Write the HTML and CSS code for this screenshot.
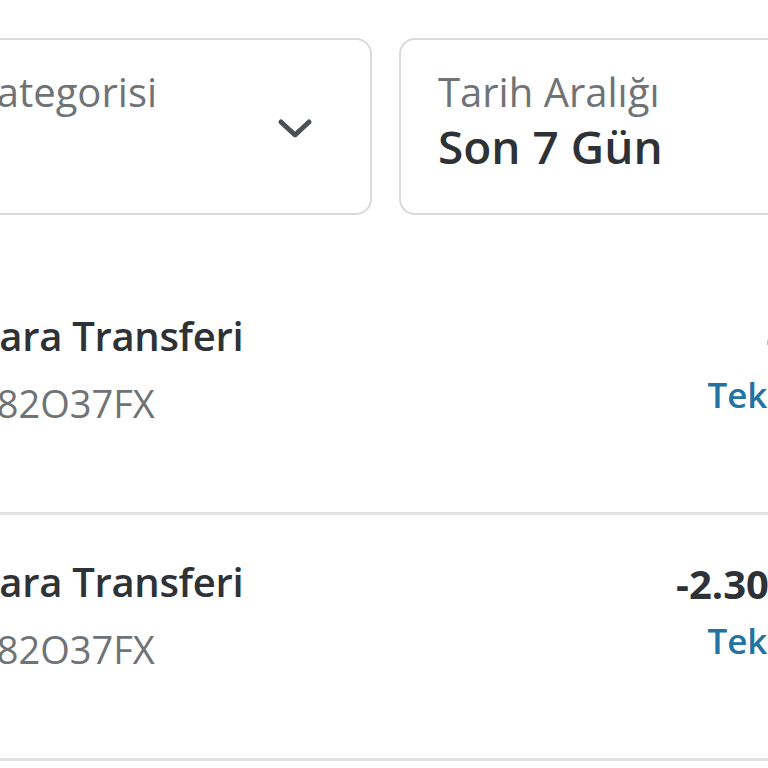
FILE: index.html
```html
<!DOCTYPE html>
<html lang="tr">
<head>
<meta charset="utf-8">
<title>İşlemler</title>
<link rel="stylesheet" href="styles.css">
</head>
<body>
<div class="page">
  <div class="filters">
    <div class="card card-wide">
      <div class="card-text">
        <div class="card-label">İşlem Kategorisi</div>
        <div class="card-value"></div>
      </div>
      <svg class="chevron" width="36" height="22" viewBox="0 0 36 22" aria-hidden="true">
        <polyline points="4,4 18,17 32,4" fill="none" stroke="#4b5055" stroke-width="5" stroke-linecap="round" stroke-linejoin="round"/>
      </svg>
    </div>
    <div class="card">
      <div class="card-text">
        <div class="card-label">Tarih Aralığı</div>
        <div class="card-value">Son 7 Gün</div>
      </div>
    </div>
  </div>
  <div class="list">
    <div class="row">
      <div class="row-main">
        <div class="row-title">Para Transferi</div>
        <div class="row-id">782O37FX</div>
      </div>
      <div class="row-side">
        <div class="row-amount">-5TL</div>
        <div class="row-link">Tekrarla</div>
      </div>
    </div>
    <div class="row">
      <div class="row-main">
        <div class="row-title">Para Transferi</div>
        <div class="row-id">782O37FX</div>
      </div>
      <div class="row-side">
        <div class="row-amount">-2.300 TL</div>
        <div class="row-link">Tekrarla</div>
      </div>
    </div>
  </div>
</div>
</body>
</html>
```

FILE: styles.css
```css
html, body {
  margin: 0;
  padding: 0;
  background: #ffffff;
  overflow: hidden;
}

body {
  font-family: "Open Sans", "Noto Sans", sans-serif;
  color: #2e3236;
  width: 768px;
  height: 768px;
}

.page {
  margin-left: -177px;
  width: 1100px;
  padding-top: 38px;
}

.filters {
  display: flex;
  gap: 27px;
}

.card {
  box-sizing: border-box;
  width: 542px;
  height: 177px;
  border: 2px solid #dadada;
  border-radius: 16px;
  padding: 28px 57px 0 37px;
  display: flex;
  align-items: flex-start;
  flex: none;
}

.card-wide {
  width: 549px;
}

.card-text {
  display: flex;
  flex-direction: column;
}

.card-label {
  font-size: 40px;
  line-height: 48px;
  color: #707376;
  white-space: nowrap;
}

.card-value {
  margin-top: 2px;
  font-size: 46px;
  line-height: 56px;
  height: 56px;
  font-weight: 600;
  color: #2e3236;
  white-space: nowrap;
}

.chevron {
  margin-left: auto;
  align-self: center;
  margin-top: -24px;
}

.list {
  margin-top: 54px;
}

.row {
  box-sizing: border-box;
  height: 246px;
  border-bottom: 3px solid #e1e1e1;
  padding: 43px 75px 0 152px;
  display: flex;
  justify-content: space-between;
  align-items: flex-start;
}

.row-main,
.row-side {
  display: flex;
  flex-direction: column;
}

.row-side {
  align-items: flex-end;
  padding-top: 2px;
}

.row-title {
  font-size: 40px;
  line-height: 48px;
  font-weight: 600;
  letter-spacing: -0.3px;
  color: #2e3236;
  white-space: nowrap;
}

.row-id {
  margin-top: 19px;
  font-size: 38px;
  line-height: 48px;
  color: #707376;
  white-space: nowrap;
}

.row-amount {
  font-size: 40px;
  line-height: 48px;
  font-weight: 700;
  color: #2e3236;
  white-space: nowrap;
}

.row-link {
  margin-top: 11px;
  font-size: 35px;
  line-height: 44px;
  font-weight: 600;
  color: #2272a4;
  white-space: nowrap;
}
```
